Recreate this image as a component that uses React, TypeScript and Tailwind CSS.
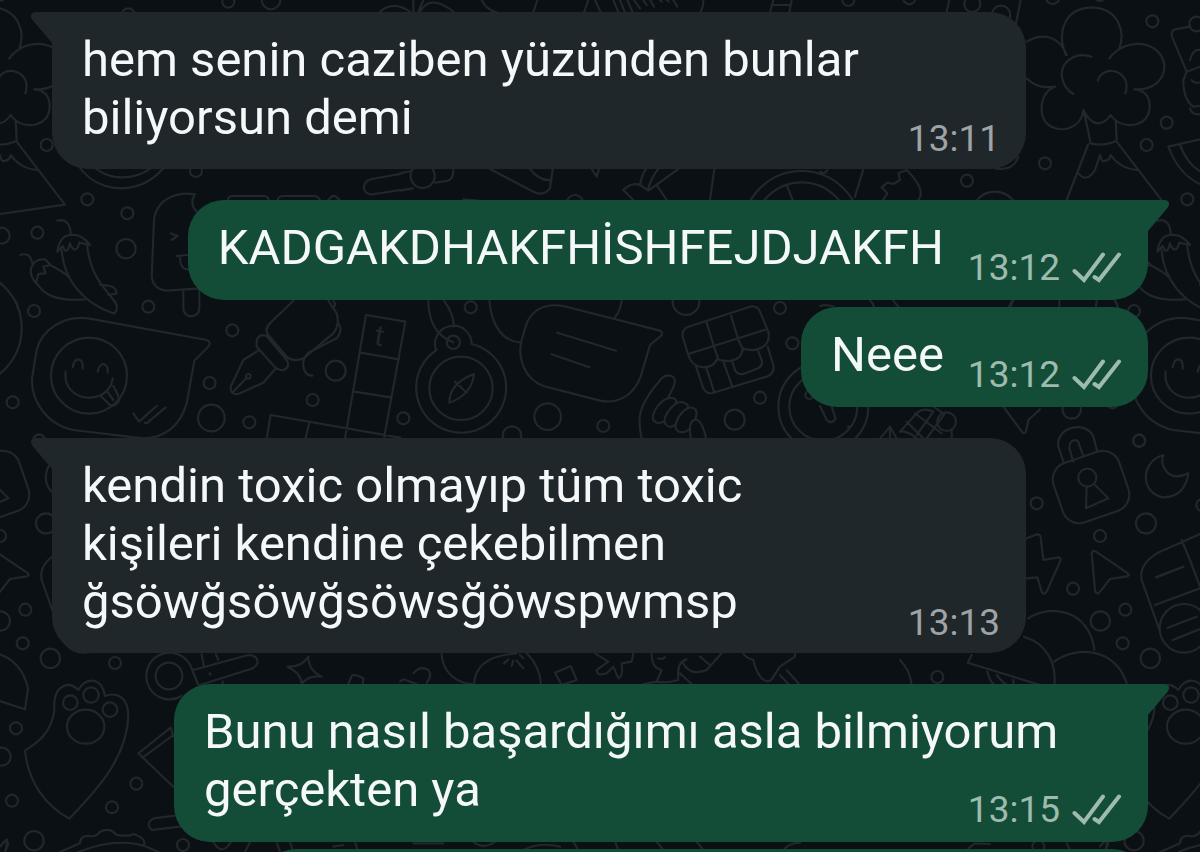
import type { ReactNode } from "react";

type Message = {
  id: number;
  from: "them" | "me";
  lines: string[];
  time: string;
  tail: boolean;
  spacing: string;
};

const messages: Message[] = [
  { id: 1, from: "them", lines: ["hem senin caziben yüzünden bunlar", "biliyorsun demi"], time: "13:11", tail: true, spacing: "mt-3" },
  { id: 2, from: "me", lines: ["KADGAKDHAKFHİSHFEJDJAKFH"], time: "13:12", tail: true, spacing: "mt-[31px]" },
  { id: 3, from: "me", lines: ["Neee"], time: "13:12", tail: false, spacing: "mt-[7px]" },
  {
    id: 4,
    from: "them",
    lines: ["kendin toxic olmayıp tüm toxic", "kişileri kendine çekebilmen", "ğsöwğsöwğsöwsğöwspwmsp"],
    time: "13:13",
    tail: true,
    spacing: "mt-[31px]",
  },
  { id: 5, from: "me", lines: ["Bunu nasıl başardığımı asla bilmiyorum", "gerçekten ya"], time: "13:15", tail: true, spacing: "mt-[31px]" },
];

function Patch({ x, y, circles = [], d, children }: { x: number; y: number; circles?: number[][]; d: string; children?: ReactNode }) {
  return (
    <g transform={`translate(${x} ${y}) scale(0.33333)`}>
      {circles.map(([cx, cy, r], i) => (
        <circle key={i} cx={cx} cy={cy} r={r} />
      ))}
      <path d={d} />
      {children}
    </g>
  );
}

function Doodles() {
  return (
    <g id="doodles" fill="none" stroke="#21272a" strokeWidth="6.5" strokeLinecap="round" strokeLinejoin="round">
      {/* ice cream, chilies, watermelon */}
      <Patch
        x={0}
        y={0}
        circles={[[685, 5, 18], [813, 0, 28], [385, 45, 20], [262, 598, 18], [382, 640, 18], [112, 698, 18], [5, 707, 24], [378, 746, 29], [588, 513, 18]]}
        d="M300 418L205 440C235 520 290 565 365 565Q440 563 490 505M240 435C265 500 310 532 365 532Q415 532 452 505
        M585 583C540 575 470 590 462 660L455 830Q460 868 500 872L600 865M585 583C572 600 575 620 590 635M512 700L533 708L514 720M530 768L562 765M540 770Q540 810 565 808M550 870V925a24 24 0 0 0 48 0V870
        M683 600Q685 588 700 588H795Q806 590 806 600M833 600Q835 588 850 588H945Q956 590 960 600M985 600Q1000 575 1018 600
        M1200 522L1115 537C1080 545 1085 590 1125 582L1200 570
        M172 662C200 655 212 675 212 705M172 755Q180 705 212 705Q245 700 270 735L238 728Q232 752 222 748Q212 742 210 730Q205 755 195 752L188 738ZM185 750C190 830 240 905 340 940Q352 940 350 915C335 880 275 850 262 740
        M60 765Q90 755 97 790M108 850C75 810 100 775 135 778L152 795L130 800L137 820L115 822ZM108 845C130 885 170 905 255 898M150 795Q190 815 205 830M300 855Q350 855 350 880L325 885"
      />
      {/* smiling bubble, pen, letter tiles */}
      <Patch
        x={0}
        y={280}
        circles={[[102, 93, 18], [445, 80, 18], [697, 151, 18], [629, 309, 18], [748, 427, 18], [634, 414, 40], [1007, 272, 30], [938, 360, 18], [38, 367, 18], [118, 482, 18], [-110, 145, 175], [267, 287, 114], [745, 289, 7]]}
        d="M265 115L620 180Q635 187 625 200L583 242L560 370C540 440 490 475 430 475L220 450C130 430 90 350 97 290L110 210C125 150 190 105 265 115
        M218 262Q222 238 235 238Q250 240 248 266M293 275Q298 252 310 252Q325 255 323 278M197 275C190 330 235 355 270 353C310 352 335 325 338 295M302 348L330 375Q345 385 358 360Q355 345 340 318M322 335L340 360M400 400L417 425L470 378M435 428L440 430L497 382
        M880 62L810 130Q792 150 805 165L860 230Q880 248 910 235L1000 160Q1020 135 1010 100L985 62M1000 62Q1008 70 1003 80M770 180Q780 160 800 168L860 240Q872 262 850 270Q835 272 825 262L770 200ZM775 212L730 240L692 320Q690 345 715 342L790 308L825 268M700 335L740 293M1015 130Q1030 150 1010 175L925 218Q900 245 915 275Q922 287 937 287
        M1035 475L1098 105L1216 125L1152 475M1082 218L1197 238M1062 335L1172 352M800 475L812 405L1200 473M927 430L917 475"
      >
        <text x="1122" y="198" fontSize="88" fontFamily="Roboto, sans-serif" transform="rotate(10 1140 180)" fill="#21272a" stroke="none">
          t
        </text>
      </Patch>
      {/* compass, note bubble, shop, hand */}
      <Patch
        x={400}
        y={150}
        circles={[[68, 78, 36], [212, 472, 18], [160, 577, 20], [183, 715, 95], [10, 805, 18], [443, 800, 40], [610, 828, 18], [336, 857, 28], [858, 455, 40], [1140, 474, 18], [1177, 580, 18], [1080, 743, 18], [1004, 809, 30], [525, 160, 25], [1205, 240, 177], [1205, 240, 143], [1270, 770, 135], [1270, 770, 102]]}
        d="M0 70L33 63M0 122L38 115M105 98L140 93Q162 88 160 57M270 57L400 125Q430 140 450 115L458 57M390 57Q420 95 455 90M575 57L590 80L597 57M190 148L235 152
        M700 150L670 120Q695 95 720 105L745 122L835 57M720 105Q725 75 738 57M745 115Q755 80 775 57M770 105L800 150M943 57L930 150M1160 105L1178 150
        M110 600A135 135 0 1 0 215 582M108 600A55 55 0 1 1 215 582M85 450C85 520 115 560 160 577M132 452Q160 490 162 530M222 672Q215 735 148 758Q148 700 222 672M165 695L200 728
        M490 468L780 542Q793 550 780 560L750 585L722 680C700 740 650 762 600 752L430 708C370 685 352 620 365 570L380 520C400 475 440 460 490 468M472 548L648 602M455 613L568 652M268 452C275 530 310 575 362 577M665 452Q662 480 645 502
        M865 615L848 560Q845 537 865 530L1050 470Q1072 465 1080 485L1105 545M865 612L1100 538M920 518L942 590L955 628M993 497L1015 570L1030 600M865 615C880 665 940 660 950 628C975 635 1025 640 1028 595C1070 610 1115 590 1105 545M888 650L910 715Q920 735 940 728L1100 680Q1125 670 1120 645L1103 590M918 650L942 725M970 635L997 710M997 635L1005 660Q1012 675 1030 672L1075 655Q1090 645 1085 630L1075 605
        M725 865C710 800 720 770 760 715L785 685Q800 670 818 680Q830 690 820 712L805 742M820 745C790 735 750 790 760 810Q770 825 790 815M855 760C830 740 785 800 795 820Q805 838 825 825M888 780C860 750 815 820 830 840Q845 855 868 838M820 745Q835 750 825 762M855 760Q868 765 862 775M888 780Q892 795 885 808M873 865Q862 812 888 808Q908 815 918 865"
      />
      {/* volcano, drink */}
      <Patch
        x={800}
        y={0}
        circles={[[145, 0, 18], [328, -5, 18], [517, 12, 24], [603, 45, 28], [758, -8, 20], [900, -15, 18], [1057, 64, 18], [1100, 368, 18], [1040, 435, 18], [735, 490, 18], [501, 542, 18], [585, 645, 70], [1190, 72, 22]]}
        d="M448 0L440 35M662 0L648 70M800 165C780 110 730 95 680 125M680 235Q710 268 765 260C720 275 715 340 740 370C780 405 845 385 850 330Q870 370 895 370Q915 370 932 345C960 390 1040 385 1048 330C1055 280 1020 268 1003 268C1060 270 1095 240 1093 195C1085 125 980 105 928 175M798 165C770 100 790 25 875 22C960 25 975 100 958 145M875 170C830 155 785 180 785 225Q790 265 820 282M893 242C905 200 965 205 978 245Q982 265 976 280
        M852 335L872 430Q910 440 950 422L947 360M865 432L800 600M950 425L1095 614L900 642M835 520Q860 550 885 510L900 465Q905 490 915 482Q930 480 932 465Q960 505 1010 510
        M1170 80L1125 88Q1110 95 1118 115L1160 215L1150 240Q1150 300 1180 320L1200 318M1170 325Q1175 345 1200 343M1170 180Q1180 145 1200 150M1160 215L1200 200M1175 240Q1180 250 1200 248
        M190 508L165 590M355 600Q380 570 320 510L295 520L300 540L280 552L262 548L245 562L262 580L250 598M585 505Q640 515 655 470M60 515Q75 525 82 510"
      />
      {/* lock, moon, pointer */}
      <Patch
        x={800}
        y={280}
        circles={[[1017, 482, 18], [710, 670, 18], [1038, 730, 30], [900, 768, 18], [862, 593, 27], [440, 425, 28], [1207, 675, 18], [815, 388, 28], [28, 345, 12]]}
        d="M60 78Q80 72 100 80M210 62Q220 70 222 80M280 62L295 80M640 62L632 80M778 62V80M890 62L888 80M945 62Q955 72 952 82M60 378L80 420Q95 435 107 415L95 380M145 438V442M240 475L270 440L290 475M270 440V475
        M300 455L350 400Q370 380 400 395M345 400L425 460M320 425L370 475M400 395L350 465M435 400L380 475M300 455Q320 450 350 475M455 450V475M400 380L430 400
        M610 380L668 458Q677 462 679 450L685 420L720 388
        M792 550L775 500C765 440 860 420 880 470L892 515M820 545L808 505Q808 480 828 480Q835 482 838 495L850 528M860 620L858 685L925 655L882 612
        M1090 525C1020 545 1020 640 1090 652Q1155 650 1165 580Q1125 600 1100 575Q1080 550 1090 525
        M680 775L712 763Q720 762 722 772L730 840L775 832Q785 835 780 845L740 935Q732 948 725 935L712 892L680 895
        M875 820Q878 808 888 815L984 880Q990 887 980 889L930 897L898 938Q888 945 885 930Z
        M1200 762L1080 815Q1015 850 1025 900M1145 780L1170 840M1070 892L1150 860"
      >
        <rect x="-104" y="-94" width="208" height="188" rx="52" transform="translate(873 621) rotate(-19)" />
      </Patch>
      {/* umbrella, capsule */}
      <Patch
        x={900}
        y={560}
        circles={[[519, 86, 18], [601, 183, 29], [676, 149, 18], [668, 250, 18], [751, 295, 29], [112, 351, 18], [702, 842, 29], [415, 860, 18], [852, 205, 73]]}
        d="M725 60L780 215M765 135L900 85M870 0L900 80M768 52L850 20M803 203L890 170M818 240L900 207
        M385 175C450 130 570 150 583 270M462 305C540 250 660 270 684 385L675 448L590 420M372 230C440 250 470 310 463 375M215 285L203 308L420 375M262 335Q268 360 280 372M290 345Q310 370 320 374M340 360V374M0 300Q30 330 35 375M205 865L225 850L270 852M500 850L510 870M625 850L618 870"
      />
      {/* paw, tape measure, sparkle */}
      <Patch
        x={0}
        y={560}
        circles={[[211, 428, 22], [273, 405, 23], [330, 449, 22], [345, 309, 18], [48, 505, 18], [5, 590, 27], [409, 671, 18], [336, 742, 18], [36, 722, 18], [549, 855, 18], [507, 348, 40], [630, 342, 2]]}
        d="M235 390Q205 360 175 390Q160 410 163 450C155 520 110 550 75 572C85 670 140 740 208 776C280 700 380 600 385 470C385 410 350 395 315 408C305 350 255 350 235 390
        M545 408A70 70 0 1 1 572 318L595 375M580 330L745 285Q775 285 772 310Q770 320 750 328L600 375M605 283L612 320M648 283L655 300M668 365V375M925 290Q925 330 965 350Q925 345 905 372Q905 340 862 320Q905 322 925 290M1045 372L1055 348Q1060 340 1090 355L1088 374
        M520 680L415 580L512 503L520 530M432 590L520 525M540 765L460 775Q435 790 455 810L540 800
        M0 860Q20 835 22 840Q20 860 15 876M180 876L240 850Q240 825 270 828Q290 832 300 815Q330 800 350 825Q390 830 400 822Q440 835 432 855M235 876Q350 830 440 860L475 876M640 846Q665 890 693 846M735 876L750 846M830 846L840 876M870 846L880 876M1000 860L1030 855M1065 846L1075 876"
      >
        <ellipse cx="257" cy="500" rx="56" ry="51" />
      </Patch>
      {/* jigsaw, dinosaur, star */}
      <Patch
        x={400}
        y={620}
        d="M125 100C125 155 170 190 215 192M222 192C225 130 280 105 350 100M312 130L325 118M335 138L340 122M350 122L370 145M360 105L370 115M380 100Q420 140 423 192M465 158L512 138L530 180L485 195ZM0 185L10 178L50 192M40 160Q60 135 85 150Q98 165 80 188
        M585 100L625 125L590 150Q590 170 620 160L640 140L655 175Q670 170 665 130L695 125L700 100M755 100Q755 145 785 150L770 185L730 192M775 115Q785 120 795 112M770 185Q800 190 835 180M835 175Q830 125 860 118M850 130Q870 170 920 150L965 100M900 110L930 135M840 160L875 192M1030 100Q1035 112 1060 120Q1065 150 1085 175Q1110 195 1120 170L1140 140L1185 110V100M1140 165L1165 192M1160 150L1195 190
        M40 670H130M220 665Q250 690 285 665M370 690Q420 665 480 680M520 665L535 690M645 665L655 690M770 665L790 690M890 665L910 690M1150 690Q1170 668 1200 668"
      />
      <Patch
        x={380}
        y={0}
        d="M0 35Q40 0 90 35M100 0V35M120 35Q150 -20 220 35M130 0L115 35M305 0Q320 30 350 37M472 0L460 37M625 0L612 37M645 0L662 37M700 0L715 37M720 0L735 37M742 0L757 35M762 0L780 25M790 0L800 15M810 0L822 20M880 0L892 20M840 0L845 5M860 0L866 5M970 0Q970 25 960 37M1180 0L1170 37M1235 0L1228 37M1175 15H1230"
      />
    </g>
  );
}

function Wallpaper() {
  return (
    <svg className="absolute inset-0 h-full w-full" viewBox="0 0 1200 852" preserveAspectRatio="xMinYMin slice" aria-hidden="true">
      <Doodles />
      <use href="#doodles" x="1100" />
      <use href="#doodles" x="-1100" />
    </svg>
  );
}

function ReadTicks() {
  return (
    <svg
      className="h-8 w-[50px]"
      viewBox="0 2 50 32"
      fill="none"
      stroke="currentColor"
      strokeWidth="4"
      strokeLinecap="round"
      role="img"
      aria-label="Okundu"
    >
      <path d="M2.500 21L12 30L31 4.500" />
      <path d="M22.500 27L27 30L47 4.500" />
    </svg>
  );
}

function Tail({ mine }: { mine: boolean }) {
  return mine ? (
    <svg className="absolute top-0 left-full h-8 w-[22px] -ml-px" viewBox="0 0 22 32" fill="#144d37" aria-hidden="true">
      <path d="M0 0H17C22 0 23.500 4 20.500 8L1 31H0Z" />
    </svg>
  ) : (
    <svg className="absolute top-0 right-full h-8 w-[22px] -mr-px" viewBox="0 0 22 32" fill="#1f272a" aria-hidden="true">
      <path d="M22 0H5C0 0 -1.500 4 1.500 8L21 31H22Z" />
    </svg>
  );
}

function Bubble({ message }: { message: Message }) {
  const mine = message.from === "me";
  const long = message.lines.length > 1;
  return (
    <li className={`flex ${message.spacing} ${mine ? "justify-end" : "justify-start"}`}>
      <article
        className={`relative flex items-end justify-between gap-6 rounded-[36px] pt-[19px] pr-[26px] pl-[30px] ${long ? "w-full max-w-[974px]" : ""} ${
          mine ? "bg-[#144d37] pb-[10px]" : "bg-[#1f272a] pb-[8px]"
        } ${message.tail ? (mine ? "rounded-tr-none" : "rounded-tl-none") : ""}`}
      >
        {message.tail && <Tail mine={mine} />}
        <p
          className={`text-[49px] leading-[58px] whitespace-nowrap text-[#f4f8f9] ${long ? "-mr-[140px]" : ""} ${
            mine ? "mb-[13px]" : "mb-[14px]"
          }`}
        >
          {message.lines.map((line) => (
            <span key={line} className="block">
              {line}
            </span>
          ))}
        </p>
        <div className={`flex items-center gap-3 text-[37px] leading-[44px] ${mine ? "text-[#9dbbae]" : "text-[#9fa3a5]"}`}>
          <time>{message.time}</time>
          {mine && <ReadTicks />}
        </div>
      </article>
    </li>
  );
}

export default function App() {
  return (
    <main className="relative h-screen overflow-hidden bg-[#0b1014] font-[Roboto,sans-serif]">
      <Wallpaper />
      <ol className="relative flex flex-col px-[52px]">
        {messages.map((message) => (
          <Bubble key={message.id} message={message} />
        ))}
        <li className="mt-[7px] flex justify-end" aria-hidden="true">
          <div className="h-24 w-full max-w-[888px] rounded-[36px] bg-[#144d37]" />
        </li>
      </ol>
    </main>
  );
}
